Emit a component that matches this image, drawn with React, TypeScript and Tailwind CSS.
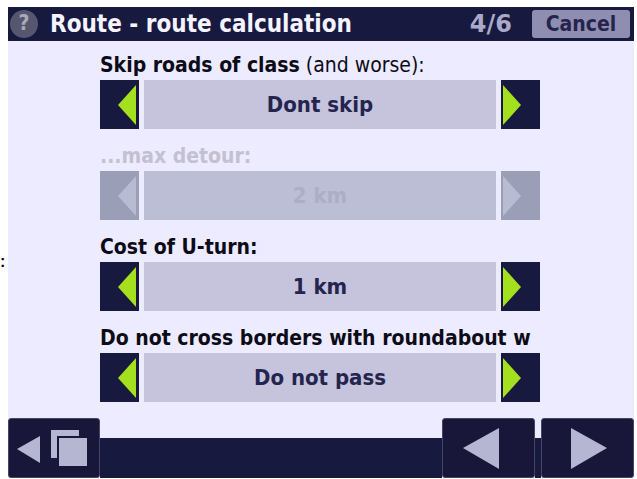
import React from "react";

interface SettingProps {
  id: string;
  label: string;
  note?: string;
  value: string;
  disabled?: boolean;
}

const Arrow: React.FC<{ className: string; next?: boolean }> = ({
  className,
  next,
}) => (
  <svg viewBox="0 0 18 40" className={className} aria-hidden="true">
    <path d={next ? "M0 0 L18 20 L0 40 Z" : "M18 0 L0 20 L18 40 Z"} />
  </svg>
);

const Setting: React.FC<SettingProps> = ({
  id,
  label,
  note,
  value,
  disabled,
}) => {
  const stepClass = disabled
    ? "flex w-[39px] shrink-0 items-center bg-[#9a9eb6]"
    : "flex w-[39px] shrink-0 items-center bg-[#17193f]";
  const arrowClass = disabled
    ? "h-10 w-[18px] fill-[#b9bbd3]"
    : "h-10 w-[18px] fill-[#a5e01e]";

  return (
    <div>
      <div
        id={id}
        className={
          disabled
            ? "mb-0.5 overflow-hidden text-[21px] leading-[26px] font-bold whitespace-nowrap text-[#c3c1cf]"
            : "mb-0.5 overflow-hidden text-[21px] leading-[26px] font-bold whitespace-nowrap text-[#0c0c18]"
        }
      >
        {label}
        {note && <span className="font-normal"> {note}</span>}
      </div>
      <div
        role="group"
        aria-labelledby={id}
        className="flex h-[49px] gap-[5px]"
      >
        <button
          disabled={disabled}
          aria-label="Previous value"
          className={`${stepClass} justify-end pr-[3px]`}
        >
          <Arrow className={arrowClass} />
        </button>
        <output
          className={
            disabled
              ? "flex flex-1 items-center justify-center bg-[#bcbed6] text-[22px] font-bold text-[#acaec5]"
              : "flex flex-1 items-center justify-center bg-[#c5c4dc] text-[22px] font-bold text-[#24244e]"
          }
        >
          {value}
        </output>
        <button
          disabled={disabled}
          aria-label="Next value"
          className={`${stepClass} pl-[2px]`}
        >
          <Arrow next className={arrowClass} />
        </button>
      </div>
    </div>
  );
};

const settings: SettingProps[] = [
  {
    id: "skip",
    label: "Skip roads of class",
    note: "(and worse):",
    value: "Dont skip",
  },
  { id: "detour", label: "...max detour:", value: "2 km", disabled: true },
  { id: "uturn", label: "Cost of U-turn:", value: "1 km" },
  {
    id: "borders",
    label: "Do not cross borders with roundabout w",
    value: "Do not pass",
  },
];

export default function App() {
  return (
    <div className="flex min-h-screen bg-white pt-[7px] pr-[3px] pb-px font-['DejaVu_Sans_Condensed','DejaVu_Sans',sans-serif]">
      <div className="flex w-2 shrink-0 flex-col items-start justify-center overflow-hidden pt-[38px] font-['Liberation_Sans',sans-serif] text-[16px] leading-[26px] font-bold text-black">
        :
      </div>
      <main className="flex min-w-0 flex-1 flex-col bg-[#edebff]">
        <header className="flex h-[34px] items-center bg-[#17193f] pr-1 pl-[2px]">
          <button
            aria-label="Help"
            className="flex size-7 shrink-0 items-center justify-center rounded-full bg-[#57566f] text-[21px] font-bold text-[#aaa9b8]"
          >
            ?
          </button>
          <h1 className="ml-3 flex-1 text-[24px] leading-[26px] font-bold whitespace-nowrap text-[#f4f3ff]">
            Route - route calculation
          </h1>
          <span className="mr-5 font-['DejaVu_Sans',sans-serif] text-[24px] leading-[26px] font-bold text-[#aaaac8]">
            4/6
          </span>
          <button className="h-7 w-[98px] rounded-[3px] bg-[#8f8eb0] text-[21px] leading-[26px] font-bold text-[#24244e]">
            Cancel
          </button>
        </header>

        <section className="flex flex-1 flex-col gap-3.5 pt-[11px] pr-[94px] pb-4 pl-[92px]">
          {settings.map((s) => (
            <Setting key={s.id} {...s} />
          ))}
        </section>

        <footer className="flex items-end">
          <button
            aria-label="Back to menu"
            className="h-[60px] w-[92px] rounded-[3px] border border-[#454565] bg-[#18173a]"
          >
            <svg viewBox="0 0 90 58" className="h-[58px] w-[90px]">
              <path d="M8 30 L31 17 V44 Z" fill="#b4b6d2" />
              <path d="M42 11 H70 V17 H48 V39 H42 Z" fill="#b4b6d2" />
              <path d="M50 19 H78 V47 H50 Z" fill="#b4b6d2" />
            </svg>
          </button>
          <div className="h-10 flex-1 bg-[#17193f]" />
          <button
            aria-label="Previous page"
            className="h-[60px] w-[93px] rounded-[3px] border border-[#454565] bg-[#18173a]"
          >
            <svg viewBox="0 0 91 58" className="h-[58px] w-[91px]">
              <path d="M20 29 L56 9 V50 Z" fill="#b4b6d2" />
            </svg>
          </button>
          <div className="h-10 w-[6px] bg-[#17193f]" />
          <button
            aria-label="Next page"
            className="h-[60px] w-[93px] rounded-[3px] border border-[#454565] bg-[#18173a]"
          >
            <svg viewBox="0 0 91 58" className="h-[58px] w-[91px]">
              <path d="M65 29 L29 9 V50 Z" fill="#b4b6d2" />
            </svg>
          </button>
        </footer>
      </main>
    </div>
  );
}
